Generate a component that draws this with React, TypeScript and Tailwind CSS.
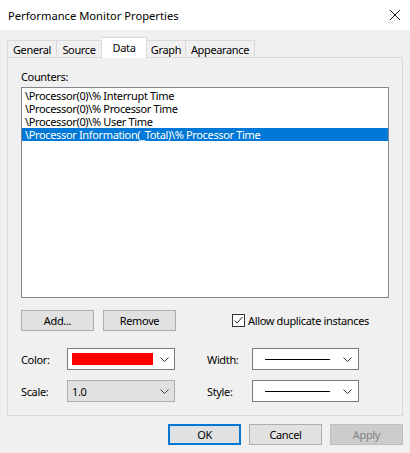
import React from "react";

function Chevron() {
  return (
    <svg width="9" height="5" viewBox="0 0 9 5" className="block">
      <path d="M0.5 0.5 L4.5 4.5 L8.5 0.5" fill="none" stroke="#3c3c3c" strokeWidth="1" />
    </svg>
  );
}

function Tab({ label, w, first }: { label: string; w: string; first?: boolean }) {
  return (
    <div
      className={
        (first ? "border-l " : "") +
        w +
        " h-[17px] border-t border-r border-[#d9d9d9] bg-[#f0f0f0] flex items-center justify-center leading-[15px] text-black whitespace-nowrap"
      }
    >
      {label}
    </div>
  );
}

function Button({ label, w }: { label: string; w: string }) {
  return (
    <div
      className={
        w +
        " h-[21px] border border-[#adadad] bg-[#e1e1e1] flex items-center justify-center leading-[15px] text-black"
      }
    >
      {label}
    </div>
  );
}

export default function App() {
  const items = [
    "\\Processor(0)\\% Interrupt Time",
    "\\Processor(0)\\% Processor Time",
    "\\Processor(0)\\% User Time",
    "\\Processor Information(_Total)\\% Processor Time",
  ];
  return (
    <div className="w-[410px] h-[453px] bg-[#f0f0f0] flex flex-col font-['Noto_Sans',sans-serif] text-[11px] tracking-[-0.35px] text-black overflow-hidden">
      {/* Title bar */}
      <div className="h-[30px] bg-white flex items-center justify-between pl-[8px] pr-[10px]">
        <span className="leading-[15px] text-[11.2px] tracking-normal">Performance Monitor Properties</span>
        <svg width="10" height="10" viewBox="0 0 10 10" className="block">
          <path d="M0 0 L10 10 M10 0 L0 10" stroke="#111" strokeWidth="1" />
        </svg>
      </div>

      {/* Tabs */}
      <div className="mt-[7px] h-[20px] flex items-end pl-[7px]">
        <Tab label="General" w="w-[50px]" first />
        <Tab label="Source" w="w-[45px]" />
        <div className="w-[45px] h-[21px] -mb-[1px] relative z-10 border-t border-r border-[#d9d9d9] bg-white flex items-start justify-center pt-[2px] leading-[15px]">
          Data
        </div>
        <Tab label="Graph" w="w-[39px]" />
        <Tab label="Appearance" w="w-[69px]" />
      </div>

      {/* Panel */}
      <div className="mx-[7px] w-[396px] h-[359px] border border-[#d9d9d9] bg-[#f0f0f0] flex flex-col px-[13px] pt-[11px]">
        <div className="leading-[15px] h-[16px]">Counters:</div>
        <div className="mt-[2px] h-[211px] border border-[#828790] bg-white pt-[1px]">
          {items.map((t, i) => (
            <div
              key={i}
              className={
                i === 3
                  ? "h-[13px] leading-[13px] pl-[3px] bg-[#0078d7] text-white whitespace-nowrap"
                  : "h-[13px] leading-[13px] pl-[3px] text-black whitespace-nowrap"
              }
            >
              {t}
            </div>
          ))}
        </div>

        {/* Buttons row */}
        <div className="mt-[12px] flex items-center">
          <Button label="Add..." w="w-[73px]" />
          <div className="w-[9px]" />
          <Button label="Remove" w="w-[73px]" />
          <div className="ml-[56px] flex items-center">
            <div className="w-[13px] h-[13px] border border-[#333333] bg-white flex items-center justify-center">
              <svg width="11" height="11" viewBox="0 0 11 11" className="block">
                <path d="M1.5 5.5 L4 8 L9.5 2" fill="none" stroke="#222" strokeWidth="1" />
              </svg>
            </div>
            <span className="ml-[3px] leading-[15px] whitespace-nowrap">Allow duplicate instances</span>
          </div>
        </div>

        {/* Color / Width row */}
        <div className="mt-[17px] flex items-center h-[22px]">
          <div className="w-[46px] leading-[15px]">Color:</div>
          <div className="w-[108px] h-[22px] border border-[#7a7a7a] bg-white flex items-center pl-[4px] pr-[5px]">
            <div className="w-[81px] h-[12px] bg-[#ff0000]" />
            <div className="flex-1" />
            <Chevron />
          </div>
          <div className="ml-[32px] w-[45px] leading-[15px]">Width:</div>
          <div className="w-[107px] h-[22px] border border-[#7a7a7a] bg-white flex items-center pl-[12px] pr-[6px]">
            <div className="w-[65px] h-[1px] bg-black" />
            <div className="flex-1" />
            <Chevron />
          </div>
        </div>

        {/* Scale / Style row */}
        <div className="mt-[10px] flex items-center h-[22px]">
          <div className="w-[46px] leading-[15px]">Scale:</div>
          <div className="w-[108px] h-[22px] border border-[#adadad] bg-[#e1e1e1] flex items-center pl-[4px] pr-[5px]">
            <span className="leading-[15px]">1.0</span>
            <div className="flex-1" />
            <Chevron />
          </div>
          <div className="ml-[32px] w-[45px] leading-[15px]">Style:</div>
          <div className="w-[107px] h-[22px] border border-[#7a7a7a] bg-white flex items-center pl-[12px] pr-[6px]">
            <div className="w-[65px] h-[1px] bg-black" />
            <div className="flex-1" />
            <Chevron />
          </div>
        </div>
      </div>

      {/* Bottom buttons */}
      <div className="mt-[8px] flex justify-end pr-[7px] gap-[8px]">
        <div className="w-[73px] h-[21px] border-2 border-[#0078d7] bg-[#e1e1e1] flex items-center justify-center leading-[15px]">
          OK
        </div>
        <Button label="Cancel" w="w-[73px]" />
        <div className="w-[73px] h-[21px] border border-[#bfbfbf] bg-[#cccccc] flex items-center justify-center leading-[15px] text-[#838383]">
          Apply
        </div>
      </div>
    </div>
  );
}
